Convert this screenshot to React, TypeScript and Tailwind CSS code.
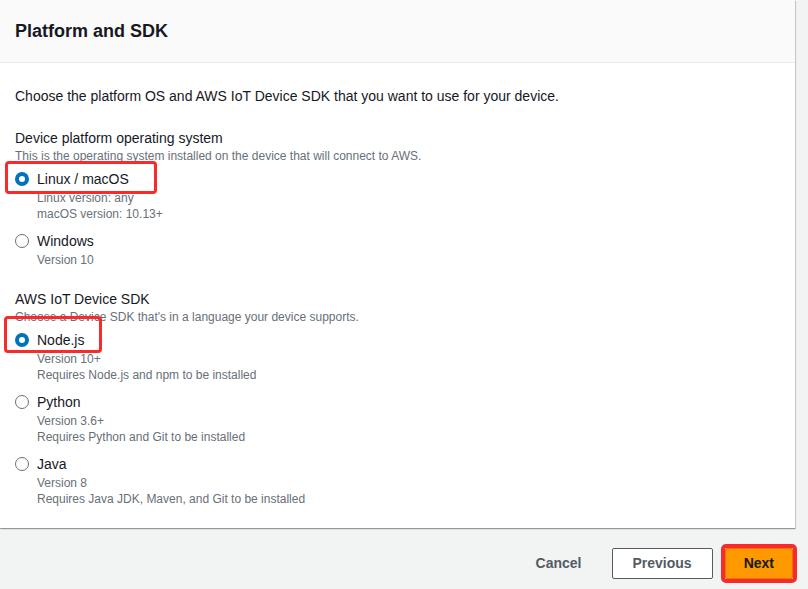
import React from 'react';

type Option = { id: string; label: string; notes: string[]; highlight?: { left: number; top: number; w: number; h: number } };

const osOptions: Option[] = [
  { id: 'linux', label: 'Linux / macOS', notes: ['Linux version: any', 'macOS version: 10.13+'], highlight: { left: -10, top: -8, w: 152, h: 33 } },
  { id: 'windows', label: 'Windows', notes: ['Version 10'] },
];

const sdkOptions: Option[] = [
  { id: 'node', label: 'Node.js', notes: ['Version 10+', 'Requires Node.js and npm to be installed'], highlight: { left: -11, top: -14, w: 98, h: 37 } },
  { id: 'python', label: 'Python', notes: ['Version 3.6+', 'Requires Python and Git to be installed'] },
  { id: 'java', label: 'Java', notes: ['Version 8', 'Requires Java JDK, Maven, and Git to be installed'] },
];

function Radio({ checked }: { checked: boolean }) {
  return checked ? (
    <span className="block h-[14px] w-[14px] shrink-0 rounded-full border-[4px] border-[#0073bb] bg-white" />
  ) : (
    <span className="block h-[14px] w-[14px] shrink-0 rounded-full border-[1.5px] border-[#687078] bg-white" />
  );
}

function RadioGroup({ title, description, options, selected }: { title: string; description: string; options: Option[]; selected: string }) {
  return (
    <div>
      <p className="text-[14px] leading-[20px] text-[#16191f]">{title}</p>
      <p className="text-[12px] leading-[16px] text-[#687078]">{description}</p>
      <div className="mt-[5px] flex flex-col gap-[9px]">
        {options.map(o => (
          <div key={o.id}>
            <div className="relative flex h-[20px] items-center gap-[8px]">
              <Radio checked={o.id === selected} />
              <span className="text-[14px] leading-[20px] text-[#16191f]">{o.label}</span>
              {o.highlight && (
                <span
                  className="pointer-events-none absolute rounded-[4px] border-[3px] border-[#fa2a2a]"
                  style={{ left: o.highlight.left, top: o.highlight.top, width: o.highlight.w, height: o.highlight.h }}
                />
              )}
            </div>
            <div className="mt-[1px] pl-[22px]">
              {o.notes.map(n => (
                <p key={n} className="text-[12px] leading-[16px] text-[#687078]">{n}</p>
              ))}
            </div>
          </div>
        ))}
      </div>
    </div>
  );
}

export default function App() {
  return (
    <div className="flex h-[589px] w-[808px] flex-col overflow-hidden bg-[#f2f3f3] font-['Liberation_Sans',Arial,sans-serif]">
      <section className="w-[795px] bg-white shadow-[0_1px_1px_0_rgba(0,28,36,0.3),1px_1px_1px_0_rgba(0,28,36,0.15)]">
        <div className="flex h-[63px] items-center border-b border-[#eaeded] bg-[#fafafa] px-[15px]">
          <h2 className="text-[18px] font-bold leading-[22px] text-[#16191f]">Platform and SDK</h2>
        </div>
        <div className="flex flex-col gap-[21px] px-[15px] pb-[21px] pt-[23px]">
          <p className="text-[14px] leading-[20px] text-[#16191f]">
            Choose the platform OS and AWS IoT Device SDK that you want to use for your device.
          </p>
          <div className="mt-[1px]">
            <RadioGroup
              title="Device platform operating system"
              description="This is the operating system installed on the device that will connect to AWS."
              options={osOptions}
              selected="linux"
            />
          </div>
          <RadioGroup
            title="AWS IoT Device SDK"
            description="Choose a Device SDK that's in a language your device supports."
            options={sdkOptions}
            selected="node"
          />
        </div>
      </section>

      <div className="flex items-center justify-end gap-[10px] pr-[15px] pt-[20px]">
        <button className="h-[31px] px-[20px] text-[14px] font-bold text-[#545b64]">Cancel</button>
        <button className="h-[31px] rounded-[2px] border border-[#545b64] bg-white px-[20px] text-[14px] font-bold text-[#545b64]">
          Previous
        </button>
        <div className="relative ml-[2px]">
          <button className="h-[31px] rounded-[2px] border border-[#ec7211] bg-[#ff9900] px-[18px] text-[14px] font-bold text-[#16191f]">
            Next
          </button>
          <span className="pointer-events-none absolute -inset-[4px] rounded-[5px] border-[4px] border-[#fa2a2a]" />
        </div>
      </div>
    </div>
  );
}
